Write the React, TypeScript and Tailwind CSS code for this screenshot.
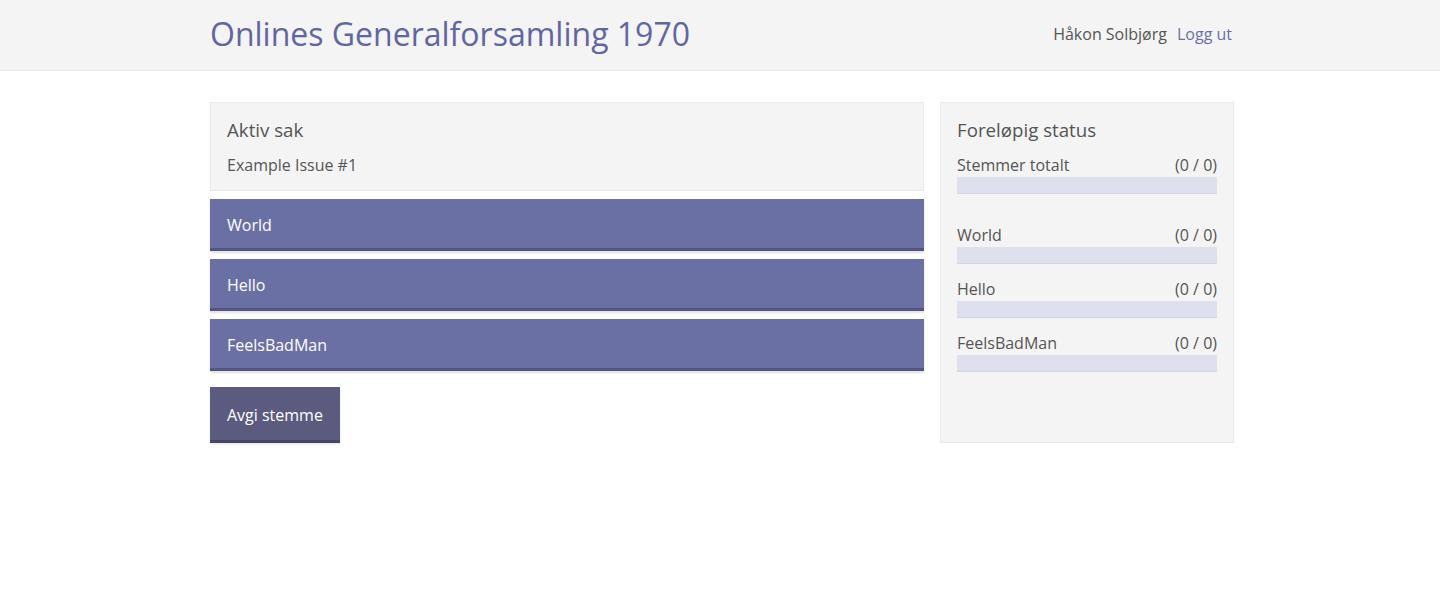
import React from "react";

const options = ["World", "Hello", "FeelsBadMan"];

export default function App() {
  return (
    <div className="min-h-[589px] bg-white text-[#555] font-['Open_Sans',sans-serif]">
      <header className="h-[71px] bg-[#f4f4f4] border-b border-[#e6e6e6]">
        <div className="w-[1028px] pl-[4px] mx-auto h-full flex items-center justify-between">
          <h1 className="text-[32px] leading-none text-[#6266a0] font-normal -mt-[2px]">
            Onlines Generalforsamling 1970
          </h1>
          <div className="text-[16px] flex gap-[10px] -mt-[2px] pr-[2px]">
            <span className="text-[#555]">Håkon Solbjørg</span>
            <a className="text-[#6b70a4]" href="#">Logg ut</a>
          </div>
        </div>
      </header>
      <main className="w-[1028px] pl-[4px] mx-auto pt-[31px] flex gap-[16px] items-start">
        <div className="w-[714px] flex flex-col">
          <section className="bg-[#f4f4f4] border border-[#e8e8e8] px-[16px] pt-[14px] pb-[14px]">
            <h2 className="text-[18.7px] leading-[26px] text-[#555]">Aktiv sak</h2>
            <p className="text-[16px] leading-[22px] mt-[11px] text-[#555]">Example Issue #1</p>
          </section>
          <div className="flex flex-col gap-[8px] mt-[8px]">
            {options.map((o) => (
              <button
                key={o}
                className="h-[52px] w-full text-left px-[17px] bg-[#6b70a4] border-b-[3px] border-[#51557f] text-white text-[16px] shadow-[0_2px_2px_rgba(0,0,0,0.12)] pt-[2px]"
              >
                {o}
              </button>
            ))}
          </div>
          <div className="mt-[16px]">
            <button className="h-[56px] px-[17px] bg-[#5a5b7e] border-b-[3px] border-[#474866] text-white text-[16px] shadow-[0_1px_2px_rgba(0,0,0,0.12)] pt-[2px]">
              Avgi stemme
            </button>
          </div>
        </div>
        <aside className="w-[294px] h-[341px] bg-[#f4f4f4] border border-[#e8e8e8] px-[16px] pt-[14px]">
          <h2 className="text-[18.7px] leading-[26px] text-[#555]">Foreløpig status</h2>
          <div className="mt-[10px]">
            <div className="flex justify-between text-[16px] leading-[24px]">
              <span>Stemmer totalt</span>
              <span>(0 / 0)</span>
            </div>
            <div className="h-[17px] bg-[#dfe0ee] border-b border-[#d3d4e6]" />
          </div>
          <div className="mt-[29px] flex flex-col gap-[13px]">
            {options.map((o) => (
              <div key={o}>
                <div className="flex justify-between text-[16px] leading-[24px]">
                  <span>{o}</span>
                  <span>(0 / 0)</span>
                </div>
                <div className="h-[17px] bg-[#dfe0ee] border-b border-[#d3d4e6]" />
              </div>
            ))}
          </div>
        </aside>
      </main>
    </div>
  );
}
